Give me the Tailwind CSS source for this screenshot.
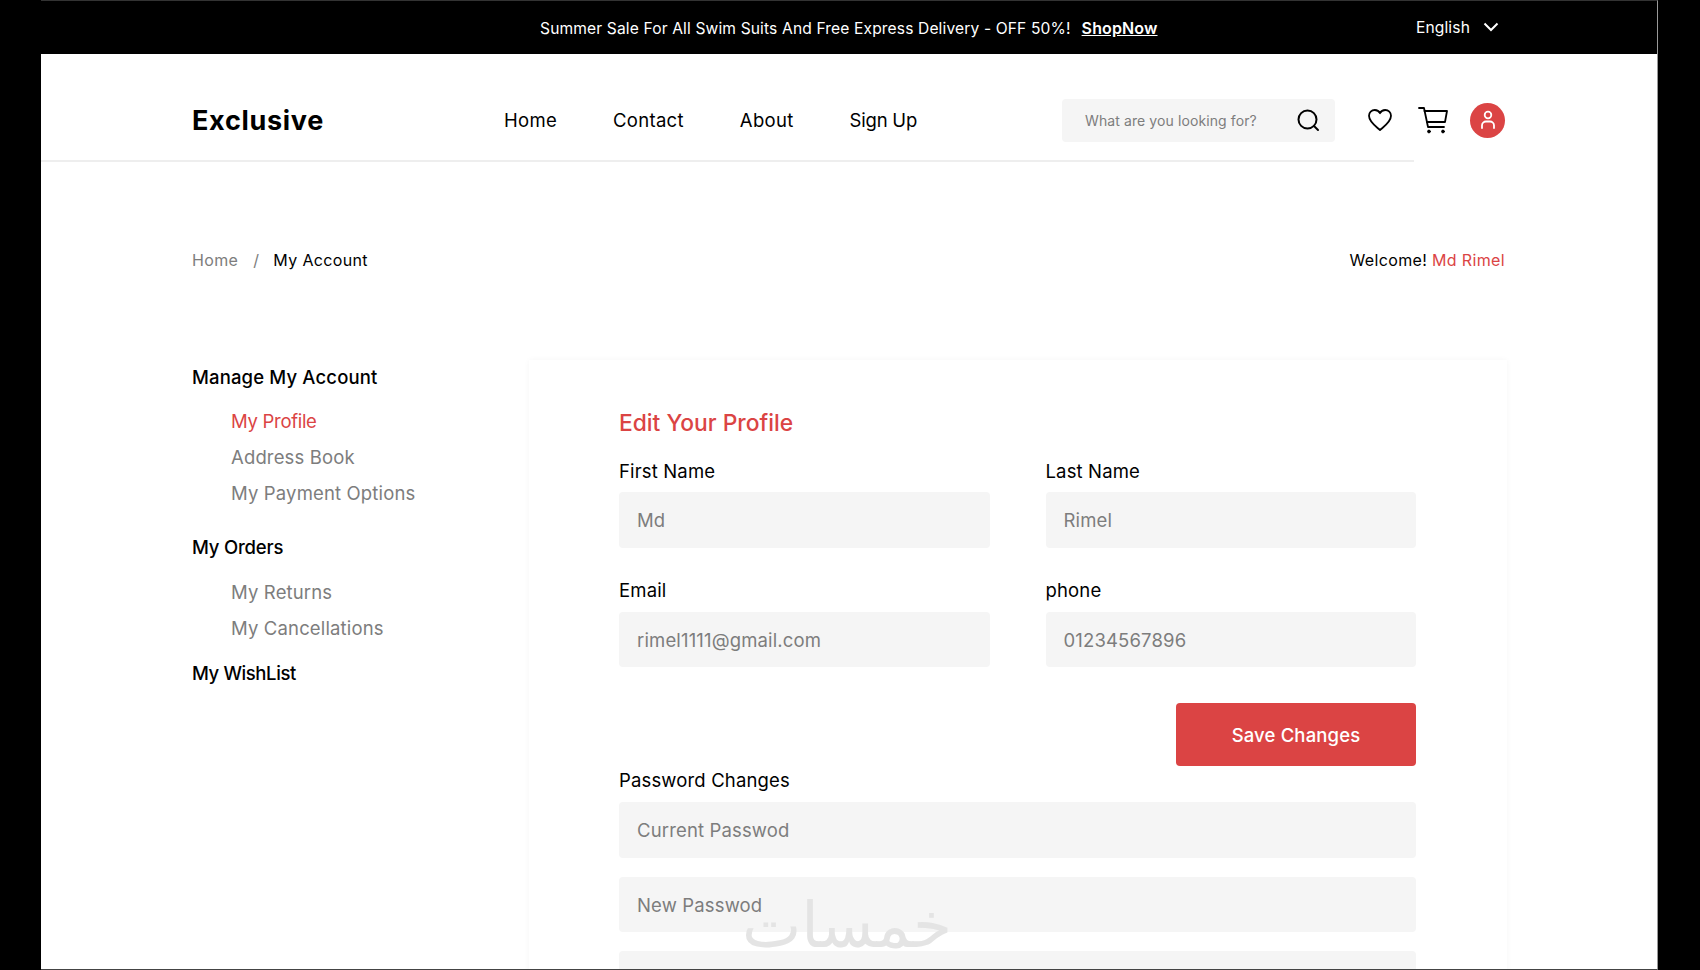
<!DOCTYPE html>
<html lang="en">
<head>
  <meta charset="UTF-8">
  <meta name="viewport" content="width=device-width, initial-scale=1.0">
  <title>Exclusive - My Account</title>
  <script src="https://cdn.jsdelivr.net/npm/@tailwindcss/browser@4"></script>
</head>
<body class="bg-black h-[970px] overflow-hidden font-['Inter','Liberation_Sans',sans-serif]">
<div class="relative ml-[41px] w-[1617px] h-[970px] overflow-hidden bg-white border-t border-b border-r border-t-[#333333] border-b-[#444444] border-r-[#999999] flex flex-col">

  <!-- top banner -->
  <div class="h-[53px] shrink-0 bg-black text-white flex items-center pl-[499px] pr-[158px] text-[15.6px] tracking-[0.13px]">
    <span class="pt-[2px]">Summer Sale For All Swim Suits And Free Express Delivery - OFF 50%!</span>
    <a href="#" class="ml-[11px] font-semibold underline text-[16px]">ShopNow</a>
    <div class="ml-auto flex items-center gap-[13px]">
      <span>English</span>
      <svg class="w-[16px] h-[10px]" viewBox="0 0 16 10" fill="none" stroke="white" stroke-width="2"><path d="M1.5 1.5 8 8l6.5-6.5"/></svg>
    </div>
  </div>

  <!-- header -->
  <header class="h-[106px] shrink-0 flex items-center pt-[26px] pl-[151px] pr-[152px]">
    <div class="w-[312px] pt-[2px] text-[27px] font-bold tracking-[0.7px] text-black">Exclusive</div>
    <nav class="flex gap-[56px] pt-[2px] text-[18.5px] tracking-[0.3px] text-black">
      <a href="#">Home</a>
      <a href="#">Contact</a>
      <a href="#">About</a>
      <a href="#" class="tracking-[-0.2px]">Sign Up</a>
    </nav>
    <div class="ml-auto w-[273px] h-[43px] rounded bg-[#f5f5f5] flex items-center pl-[23px] pr-[15px] text-[14px] tracking-[0.1px] text-[#7d7d7d]">
      <span>What are you looking for?</span>
      <svg class="ml-auto w-[24px] h-[24px]" viewBox="0 0 24 24" fill="none" stroke="black" stroke-width="2" stroke-linecap="round"><circle cx="11.5" cy="11.5" r="9"/><path d="M18 18l4 4"/></svg>
    </div>
    <svg class="ml-[33px] w-[24px] h-[22px]" viewBox="0 0 24 22" fill="none" stroke="black" stroke-width="1.8" stroke-linejoin="round"><path d="M6.8 1C3.6 1 1 3.6 1 6.8 1 13 8 17.5 12 21c4-3.500 11-8 11-14.200C23 3.600 20.400 1 17.200 1 15 1 13 2.200 12 4.200 11 2.200 9 1 6.800 1Z"/></svg>
    <svg class="ml-[26px] w-[30px] h-[27px]" viewBox="0 0 30 27" fill="none" stroke="black" stroke-width="1.8" stroke-linecap="round" stroke-linejoin="round"><path d="M1 1h5l4 19h16"/><path d="M6.500 4H29l-2 11H9"/><circle cx="11" cy="24.500" r="1.400" fill="black" stroke-width="1"/><circle cx="25" cy="24.500" r="1.400" fill="black" stroke-width="1"/></svg>
    <div class="ml-[22px] w-[35px] h-[35px] rounded-full bg-[#db4444] flex items-center justify-center">
      <svg class="w-[18px] h-[20px]" viewBox="0 0 18 20" fill="none" stroke="white" stroke-width="1.800" stroke-linecap="round"><circle cx="9" cy="5" r="3.300"/><path d="M3 18v-2.500C3 13 5 11.500 7 11.500h4c2 0 4 1.500 4 4V18"/></svg>
    </div>
  </header>
  <div class="h-[2px] w-[1373px] shrink-0 bg-[#eeeeee]"></div>

  <main class="pl-[151px] pr-[152px]">
    <!-- breadcrumb row -->
    <div class="mt-[88px] h-5 flex items-center text-[16px] tracking-[0.35px]">
      <span class="text-[#7d7d7d]">Home</span>
      <span class="ml-[15px] text-[#7d7d7d]">/</span>
      <span class="ml-[14px] text-black">My Account</span>
      <span class="ml-auto text-black">Welcome! <span class="text-[#db4444]">Md Rimel</span></span>
    </div>

    <div class="mt-[90px] flex">
      <!-- sidebar -->
      <aside class="w-[337px] shrink-0 pt-[5px] text-[18.5px] tracking-[0.15px]">
        <div class="h-6 leading-6 font-medium text-black">Manage My Account</div>
        <ul class="mt-[20px] pl-[39px] flex flex-col gap-3 text-[#7d7d7d]">
          <li class="h-6 leading-6 tracking-[-0.3px] text-[#db4444]">My Profile</li>
          <li class="h-6 leading-6">Address Book</li>
          <li class="h-6 leading-6">My Payment Options</li>
        </ul>
        <div class="mt-[30px] h-6 leading-6 tracking-[-0.2px] font-medium text-black">My Orders</div>
        <ul class="mt-[21px] pl-[39px] flex flex-col gap-3 text-[#7d7d7d]">
          <li class="h-6 leading-6">My Returns</li>
          <li class="h-6 leading-6">My Cancellations</li>
        </ul>
        <div class="mt-[21px] h-6 leading-6 tracking-[-0.4px] font-medium text-black">My WishList</div>
      </aside>

      <!-- profile card -->
      <section class="w-[978px] h-[700px] shrink-0 pt-12 pl-[90px] pr-[91px] shadow-[0_0_6px_rgba(0,0,0,0.04)]">
        <h2 class="h-[30px] leading-[30px] text-[22.8px] font-medium text-[#db4444]">Edit Your Profile</h2>
        <div class="mt-[21px] grid grid-cols-2 gap-x-[56px] text-[18.5px] tracking-[0.15px]">
          <div>
            <div class="h-6 leading-6 text-black">First Name</div>
            <div class="mt-[9px] h-[56px] pt-[2px] rounded bg-[#f5f5f5] flex items-center pl-[18px] text-[#7d7d7d]">Md</div>
          </div>
          <div>
            <div class="h-6 leading-6 text-black">Last Name</div>
            <div class="mt-[9px] h-[56px] pt-[2px] rounded bg-[#f5f5f5] flex items-center pl-[18px] text-[#7d7d7d]">Rimel</div>
          </div>
          <div class="mt-[30px]">
            <div class="h-6 leading-6 text-black">Email</div>
            <div class="mt-[10px] h-[55px] pt-[2px] rounded bg-[#f5f5f5] flex items-center pl-[18px] text-[#7d7d7d]">rimel1111@gmail.com</div>
          </div>
          <div class="mt-[30px]">
            <div class="h-6 leading-6 text-black">phone</div>
            <div class="mt-[10px] h-[55px] pt-[2px] rounded bg-[#f5f5f5] flex items-center pl-[18px] text-[#7d7d7d]">01234567896</div>
          </div>
        </div>
        <div class="mt-9 flex justify-end">
          <button class="w-[240px] h-[63px] pt-[2px] rounded bg-[#db4444] text-white text-[18.5px] tracking-[0.15px] font-medium">Save Changes</button>
        </div>
        <div class="mt-[2px] h-6 leading-6 text-[18.5px] tracking-[0.15px] text-black">Password Changes</div>
        <div class="mt-[10px] h-[56px] pt-[2px] rounded bg-[#f5f5f5] flex items-center pl-[18px] text-[18.5px] tracking-[0.15px] text-[#7d7d7d]">Current Passwod</div>
        <div class="mt-[19px] h-[55px] pt-[2px] rounded bg-[#f5f5f5] flex items-center pl-[18px] text-[18.5px] tracking-[0.15px] text-[#7d7d7d]">New Passwod</div>
        <div class="mt-[19px] h-[56px] rounded bg-[#f5f5f5]"></div>
      </section>
    </div>
  </main>

  <!-- watermark over the page -->
  <div dir="rtl" lang="ar" class="absolute left-[707px] top-[890px] w-[204px] text-center text-[63px] leading-[70px] text-[#e4e4e4] font-['DejaVu_Sans',sans-serif]">خمسات</div>
</div>
</body>
</html>
